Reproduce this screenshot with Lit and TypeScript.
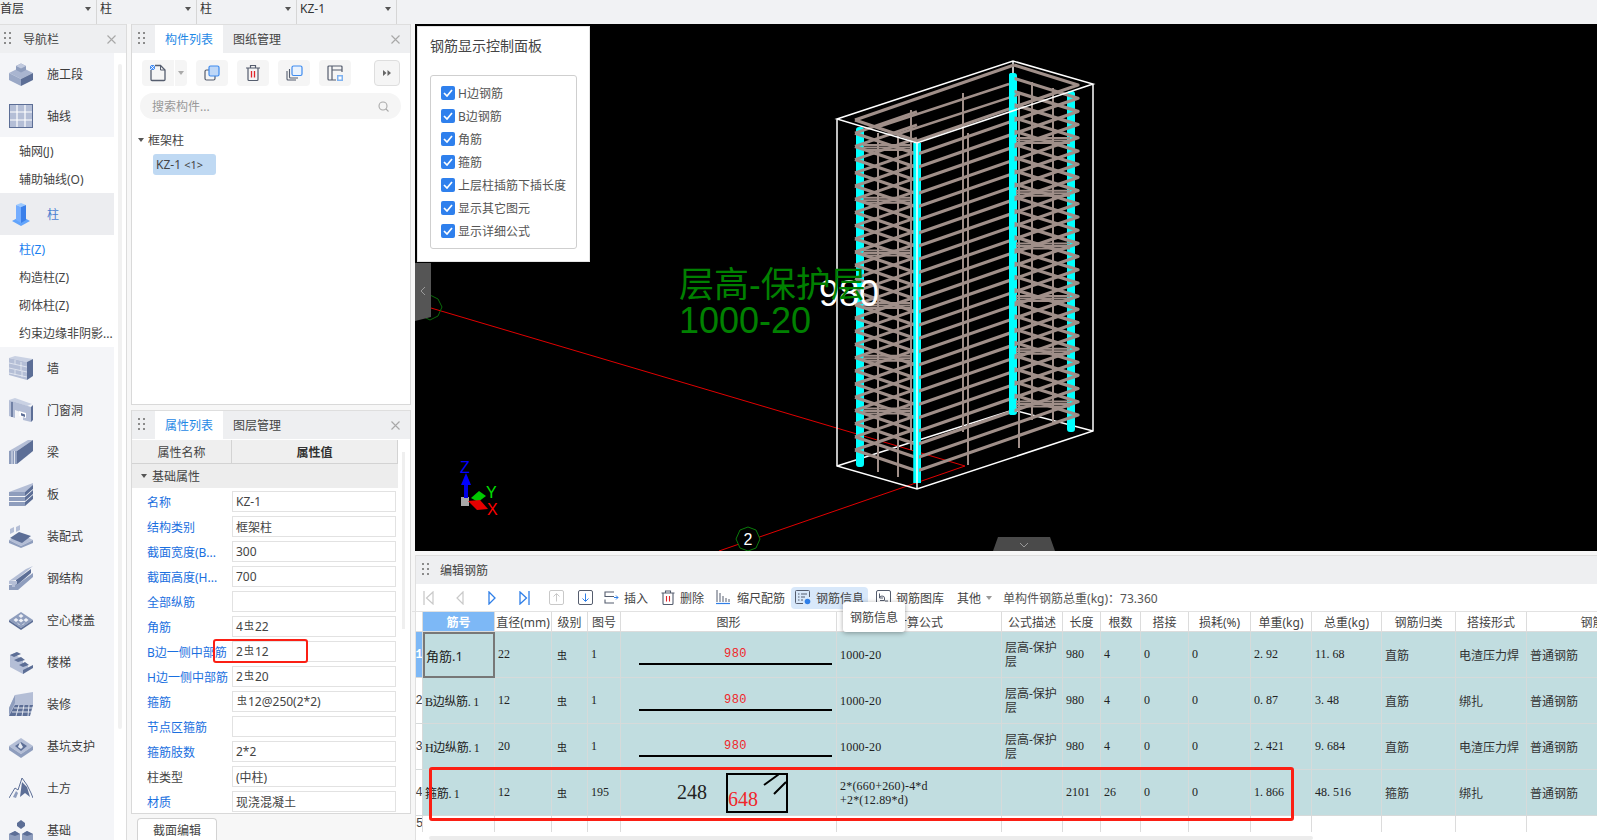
import { LitElement, html, css, svg } from "lit";
import { customElement } from "lit/decorators.js";

const L = "#b4bed6", M = "#8e9dbd", D = "#5c6e96";

const navIcons: Record<string, any> = {
  shigong: svg`<path d="M0 11 12 5 24 11 12 17Z" fill="#a9b5d0"/><path d="M0 11 12 17V24L0 18Z" fill="#9aa8c6"/><path d="M24 11 12 17V24L24 18Z" fill="${D}"/><path d="M7 4 12 1.500 17 4V8L12 10.500 7 8Z" fill="${M}"/><path d="M7 4 12 1.500 17 4 12 6.500Z" fill="#c0c9de"/>`,
  axis: svg`<rect x="0.500" y="0.500" width="23" height="23" fill="${L}" stroke="${D}"/><path d="M8 1V23M16 1V23M1 8H23M1 16H23" stroke="#fff" stroke-width="1.200"/>`,
  col: svg`<path d="M0 19 9 14 18 19 9 24Z" fill="#62a4fb"/><path d="M4 3 9 1 14 3 9 5Z" fill="#9cc9ff"/><path d="M4 3 9 5V21L4 18Z" fill="#74adff"/><path d="M14 3 9 5V21L14 18Z" fill="#3b80ea"/>`,
  wall: svg`<path d="M0 2 6 0 24 3 18 6Z" fill="#c9d1e3"/><path d="M0 2 18 6V24L0 19Z" fill="${L}"/><path d="M24 3 18 6V24L24 20Z" fill="${D}"/><path d="M0 7 18 11M0 12 18 16M0 17 18 21M6 4V8M12 9V14M6 14V19M12 6V10M13 15V21" stroke="#e8ecf4" stroke-width="0.800" fill="none"/>`,
  door: svg`<path d="M0 2 6 0 23 6 18 8Z" fill="#c9d1e3"/><path d="M0 2 22 9V24L14 22V15L6 12V20L0 18Z" fill="${L}"/><path d="M10 13 17 15V20L10 18Z" fill="#fff"/><path d="M12 15 16 16.500V19L12 17.500Z" fill="${D}"/><path d="M22 9 24 7V22L22 24Z" fill="${D}"/><path d="M3 4V19" stroke="${D}" stroke-width="1.500"/>`,
  beam: svg`<path d="M0 11 19 0 24 0 8 11Z" fill="${L}"/><path d="M0 11H8V24H0Z" fill="${M}"/><path d="M3 11V24M5.500 11V24" stroke="#dfe4ee"/><path d="M8 11 24 0V11L8 24Z" fill="${D}"/>`,
  slab: svg`<path d="M0 10 16 4 24 1V4L16 10H0Z" fill="${L}"/><path d="M0 10H16V14H0ZM0 15H16V19H0ZM0 20H16V24H0Z" fill="${M}"/><path d="M16 10 24 3V7L16 14ZM16 15 24 8V12L16 19ZM16 20 24 13V17L16 24Z" fill="${D}"/>`,
  prefab: svg`<path d="M1 5 5 3V8L1 10ZM7 3 11 1V6L7 8Z" fill="${L}"/><path d="M0 16 12 10 24 16 12 22Z" fill="${L}"/><path d="M0 16 12 22V24L0 19ZM24 16 12 22V24L24 19Z" fill="${M}"/><path d="M1 14 10 8 22 12 13 19Z" fill="${D}"/>`,
  steel: svg`<path d="M0 15 17 3 24 0 7 14Z" fill="${L}"/><path d="M6 15 10 15 8 19Z" fill="${D}"/><path d="M7 14 22 3V7L7 20Z" fill="${D}"/><path d="M0 19 9 18 24 7V11L9 24H0Z" fill="${M}"/><path d="M0 15H8V18H0Z" fill="${L}"/><path d="M3 17H6V21H3Z" fill="${L}"/>`,
  hollow: svg`<path d="M0 12 12 4 24 12 12 20Z" fill="${M}"/><path d="M0 12V14L12 22 24 14V12L12 20Z" fill="${D}"/><g fill="#eef0f6"><path d="M12 6 14.500 8 12 10 9.500 8Z"/><path d="M7 10 9.500 12 7 14 4.500 12Z"/><path d="M17 10 19.500 12 17 14 14.500 12Z"/><path d="M12 10.500 14.500 12.500 12 14.500 9.500 12.500Z"/><path d="M7.500 14 10 16 12 17.500 9.500 16.500Z"/><path d="M16.500 14 14 16 12 17.500 14.500 16.500Z"/></g>`,
  stairs: svg`<path d="M1 5 8 2 8 6 14 9V13L19 16V20L14 24 1 17Z" fill="${L}"/><path d="M1 5 8 2 12 4 5 7ZM5 10 12 7 16 10 9 12ZM10 15 16 12 20 15 14 17Z" fill="${D}"/><path d="M14 24 24 18V15L14 20Z" fill="${D}"/>`,
  deco: svg`<path d="M0 16 6 3 24 0V14L4 24H0Z" fill="${L}"/><path d="M0 16 6 3V11L0 23Z" fill="${M}"/><path d="M0 24 6 13H24L21 24Z" fill="${D}"/><path d="M5 16H24M3 20H23M10 13 7 24M15 13 13 24M20 13 19 24" stroke="#e8ecf4" stroke-width="0.900"/>`,
  pit: svg`<path d="M0 12 12 4 24 12 12 20Z" fill="${L}"/><path d="M0 12V16L12 24 24 16V12L12 20Z" fill="${M}"/><path d="M6 12 12 8 18 12 12 17Z" fill="${D}"/><path d="M11 8 14 13 12 15 9 13Z" fill="#e6eaf2"/>`,
  earth: svg`<path d="M0 22 6 12 9 14 13 2 18 9 22 17 24 22" fill="none" stroke="${D}" stroke-width="1"/><path d="M11 21 13 6 18 11 21 21 16 17Z" fill="${D}"/><path d="M4 21 7 15 9 17 7 22Z" fill="${M}"/>`,
  found: svg`<path d="M8 5 12 2 16 5V8L12 11 8 8Z" fill="${D}"/><path d="M0 16 6 13 11 16V23L6 26 0 23Z" fill="${M}"/><path d="M13 16 18 13 24 16V23L18 26 13 23Z" fill="${M}"/><path d="M0 16 6 13 11 16 6 18ZM13 16 18 13 24 16 18 18Z" fill="${D}"/>`,
};

type NavItem = { t: string; i?: string; on?: boolean; act?: boolean };
const nav: NavItem[] = [
  { t: "施工段", i: "shigong" },
  { t: "轴线", i: "axis" },
  { t: "轴网(J)" },
  { t: "辅助轴线(O)" },
  { t: "柱", i: "col", on: true },
  { t: "柱(Z)", act: true },
  { t: "构造柱(Z)" },
  { t: "砌体柱(Z)" },
  { t: "约束边缘非阴影..." },
  { t: "墙", i: "wall" },
  { t: "门窗洞", i: "door" },
  { t: "梁", i: "beam" },
  { t: "板", i: "slab" },
  { t: "装配式", i: "prefab" },
  { t: "钢结构", i: "steel" },
  { t: "空心楼盖", i: "hollow" },
  { t: "楼梯", i: "stairs" },
  { t: "装修", i: "deco" },
  { t: "基坑支护", i: "pit" },
  { t: "土方", i: "earth" },
  { t: "基础", i: "found" },
];

const REBAR = "虫";
const props: [string, any, boolean][] = [
  ["名称", "KZ-1", true],
  ["结构类别", "框架柱", true],
  ["截面宽度(B...", "300", true],
  ["截面高度(H...", "700", true],
  ["全部纵筋", "", true],
  ["角筋", html`4<span class="rb">${REBAR}</span>22`, true],
  ["B边一侧中部筋", html`2<span class="rb">${REBAR}</span>12`, true],
  ["H边一侧中部筋", html`2<span class="rb">${REBAR}</span>20`, true],
  ["箍筋", html`<span class="rb">${REBAR}</span>12@250(2*2)`, true],
  ["节点区箍筋", "", true],
  ["箍筋肢数", "2*2", true],
  ["柱类型", "(中柱)", false],
  ["材质", "现浇混凝土", true],
];

const checks = ["H边钢筋", "B边钢筋", "角筋", "箍筋", "上层柱插筋下插长度", "显示其它图元", "显示详细公式"];

const headers = ["筋号", "直径(mm)", "级别", "图号", "图形", "计算公式", "公式描述", "长度", "根数", "搭接", "损耗(%)", "单重(kg)", "总重(kg)", "钢筋归类", "搭接形式", "钢筋类型"];
const D3 = "层高-保护层";
const rows = [
  ["角筋.1", "22", "1", "1000-20", D3, "980", "4", "0", "0", "2. 92", "11. 68", "直筋", "电渣压力焊", "普通钢筋"],
  ["B边纵筋. 1", "12", "1", "1000-20", D3, "980", "4", "0", "0", "0. 87", "3. 48", "直筋", "绑扎", "普通钢筋"],
  ["H边纵筋. 1", "20", "1", "1000-20", D3, "980", "4", "0", "0", "2. 421", "9. 684", "直筋", "电渣压力焊", "普通钢筋"],
  ["箍筋. 1", "12", "195", "2*(660+260)-4*d +2*(12.89*d)", "", "2101", "26", "0", "0", "1. 866", "48. 516", "箍筋", "绑扎", "普通钢筋"],
];

// ---- cage geometry (page coordinates, the svg viewBox matches the page)
const RING = "#a08f89";
const levels = Array.from({ length: 26 }, (_, k) => k * 13.2);
function cage() {
  const rings = levels.map((d, k) => {
    const full = k === 0;
    const yLF = 120 + d, yFF = 141 + d, yRR = 85 + d, yBB = 65 + d;
    return svg`
      <path d="M855 ${yLF} L917 ${yFF} L1078 ${yRR} L1014 ${yBB}" fill="none" stroke="${RING}" stroke-width="3.200" stroke-linejoin="round"/>
      ${full
        ? svg`<path d="M855 ${yLF} L1014 ${yBB}" fill="none" stroke="${RING}" stroke-width="3.200"/>`
        : svg`<path d="M855 ${yLF} L917 ${yLF - 21.500}" fill="none" stroke="${RING}" stroke-width="3"/>`}`;
  });
  const ties = [0, 1, 2, 3, 4, 5].flatMap((i) => {
    const y = 145 + i * 52.7;
    const y2 = 138 + i * 52.7;
    return [
      svg`<path d="M863 ${y}H910M863 ${y + 2.500}H910M863 ${y + 5}H910" stroke="${RING}" stroke-width="2"/>`,
      svg`<path d="M1016 ${y2}H1070M1016 ${y2 + 2.500}H1070M1016 ${y2 + 5}H1070" stroke="${RING}" stroke-width="2"/>`,
    ];
  });
  const verts: [number, number, number][] = [
    [878, 133, 472], [898, 133, 477], [911, 110, 450], [963, 93, 432], [968, 133, 465],
    [1019, 93, 448], [1032, 82, 420], [1053, 88, 425],
  ];
  return svg`
    <path d="M1013 61V410M837 466 1013 410 1093 431" fill="none" stroke="#fff" stroke-width="1.500"/>
    <rect x="856" y="127" width="8" height="340" rx="3" fill="#00ffff"/>
    <rect x="1067" y="91" width="8" height="341" rx="3" fill="#00ffff"/>
    <rect x="1009" y="73" width="8" height="342" rx="3" fill="#00ffff"/>
    <rect x="913.500" y="143" width="7.500" height="340" fill="#00ffff"/>
    ${verts.map(([x, a, b]) => svg`<path d="M${x} ${a}V${b}" stroke="${RING}" stroke-width="2"/>`)}
    <path d="M878 127 1009 84M898 134 1020 94" fill="none" stroke="${RING}" stroke-width="2.400"/>
    ${rings}
    ${ties}
    <rect x="913.500" y="143" width="5.500" height="340" fill="#00ffff"/>
    <rect x="1009" y="73" width="5.500" height="342" rx="2" fill="#00ffff"/>
    <path d="M837 119 1013 61 1093 84 917 143ZM837 119V466L917 489 1093 431V84M917 143V489" fill="none" stroke="#fff" stroke-width="1.500"/>`;
}

const grip = html`<svg class="grip" width="7" height="14" viewBox="0 0 7 14"><g fill="#8b8b8b"><rect x="0" y="0" width="2" height="2"/><rect x="5" y="0" width="2" height="2"/><rect x="0" y="5" width="2" height="2"/><rect x="5" y="5" width="2" height="2"/><rect x="0" y="10" width="2" height="2"/><rect x="5" y="10" width="2" height="2"/></g></svg>`;
const closeX = html`<svg class="close" width="9" height="9" viewBox="0 0 9 9"><path d="M0.500 0.500 8.500 8.500M8.500 0.500 0.500 8.500" stroke="#a8a8a8" stroke-width="1.100"/></svg>`;

@customElement("app-root")
export class AppRoot extends LitElement {
  static styles = css`
    :host { display: block; width: 1597px; height: 840px; overflow: hidden; position: relative; font-family: "Noto Sans", "Noto Sans CJK SC", sans-serif; font-size: 12px; color: #444; background: #f7f7f7; }
    .page { display: grid; grid-template-rows: 24px 816px; height: 840px; }
    .top { display: flex; background: #f1f2f4; }
    .sel { width: 100px; box-sizing: border-box; padding-left: 3px; border-right: 1px solid #d6d6d6; display: flex; align-items: center; justify-content: space-between; padding-right: 5px; padding-bottom: 6px; line-height: 16px; color: #333; }
    .sel.first { width: 97px; padding-left: 0; }
    .tri { width: 0; height: 0; border: 3px solid transparent; border-top: 4px solid #555; border-bottom: 0; }
    .main { display: flex; min-height: 0; }
    .nav { width: 127px; flex: none; border-right: 1px solid #dcdcdc; box-sizing: border-box; background: #fff; position: relative; overflow: hidden; }
    .phead { height: 29px; background: #eeeff1; display: flex; align-items: center; box-sizing: border-box; border-top: 1px solid #dedede; position: relative; color: #444; }
    .nav .phead { padding-left: 4px; gap: 12px; }
    .phead .close { position: absolute; right: 10px; top: 10px; }
    .navbody { display: flex; }
    .navlist { width: 114px; flex: none; }
    .track { width: 4px; height: 665px; margin: 11px 0 0 4px; background: #f1f1f1; border-radius: 2px; flex: none; }
    .mi { height: 42px; background: #f4f5f8; display: flex; align-items: center; padding-left: 9px; gap: 14px; color: #3c3c3c; box-sizing: border-box; }
    .mi svg { width: 24px; height: 24px; flex: none; }
    .mi.on { background: #ecedf0; color: #4a7fd0; }
    .mi.on svg { margin-left: 3px; margin-right: -3px; }
    .si { height: 28px; display: flex; align-items: center; padding-left: 19px; background: #fff; color: #444; white-space: nowrap; overflow: hidden; }
    .si.act { color: #1a7ff0; }
    .mid { width: 280px; margin-left: 4px; flex: none; display: flex; flex-direction: column; gap: 4px; }
    .panel { border: 1px solid #d9d9d9; border-top: 0; background: #fff; box-sizing: border-box; flex: none; }
    .p1 { height: 381px; margin-bottom: 1px; }
    .p2 { height: 404px; position: relative; }
    .mid .phead { padding-left: 6px; }
    .tab { height: 28px; display: flex; align-items: center; justify-content: center; width: 68px; }
    .tab.active { background: #fff; color: #1e88e5; margin-left: 10px; }
    .tools { display: flex; gap: 9px; padding: 7px 10px 0 10px; }
    .tb { width: 32px; height: 26px; border-radius: 4px; background: #f5f5f5; display: flex; align-items: center; justify-content: center; flex: none; }
    .tb svg { display: block; }
    .splitgroup { display: flex; gap: 1px; }
    .splitgroup .tb:first-child { border-radius: 4px 0 0 4px; }
    .splitgroup .arrow { width: 12px; border-radius: 0 4px 4px 0; }
    .tb .tri { border-top-color: #aaa; }
    .tb.more { width: 26px; box-sizing: border-box; border: 1px solid #dedede; margin-left: auto; margin-right: 0; }
    .search { margin: 7px 9px 0 8px; height: 26px; border-radius: 13px; background: #f5f5f5; color: #999; display: flex; align-items: center; justify-content: space-between; padding: 0 12px; }
    .tree { padding: 13px 0 0 6px; }
    .tree .node { display: flex; align-items: center; gap: 4px; height: 16px; color: #444; }
    .chip { margin: 6px 0 0 15px; width: 63px; height: 21px; box-sizing: border-box; background: #bfd9f3; border-radius: 3px; display: flex; align-items: center; padding-left: 3px; color: #444; white-space: pre; }
    .chip small { font-size: 11px; }
    .pbody { display: flex; }
    .ptable { width: 266px; flex: none; }
    .phd { display: grid; grid-template-columns: 100px 166px; height: 24px; background: #efefef; border-bottom: 1px solid #d3d3d3; box-sizing: border-box; margin-top: 1px; }
    .phd div { display: flex; align-items: center; justify-content: center; border-right: 1px solid #d3d3d3; }
    .phd .b { font-weight: 700; color: #333; }
    .grp { height: 24px; background: #ededed; display: flex; align-items: center; padding-left: 9px; gap: 5px; color: #444; }
    .rowswrap { padding-top: 1px; }
    .pr { display: grid; grid-template-columns: 100px 164px; height: 25px; align-items: center; }
    .pr .lb { padding-left: 15px; color: #1a6fe0; white-space: nowrap; font-size: 12px; overflow: visible; }
    .pr .lb.dark { color: #444; }
    .pr .vl { height: 21px; border: 1px solid #e2e2e2; box-sizing: border-box; padding-left: 3px; display: flex; align-items: center; color: #444; }
    .rb { font-size: 10px; position: relative; top: -2px; margin: 0 1px; }
    .ps { width: 3px; height: 177px; margin: 13px 0 0 4px; background: #efefef; flex: none; }
    .secbtn { width: 80px; height: 22px; margin: 0 0 0 6px; box-sizing: border-box; border: 1px solid #d3d3d3; border-bottom: 0; border-radius: 4px 4px 0 0; background: #fff; display: flex; align-items: center; justify-content: center; flex: none; }
    .redbox { position: absolute; border: 2px solid #fb1f14; border-radius: 3px; box-sizing: border-box; pointer-events: none; }
    .rb1 { left: 81px; top: 229px; width: 95px; height: 24px; }
    .right { width: 1182px; margin-left: 4px; flex: none; display: flex; flex-direction: column; position: relative; }
    .canvas { height: 527px; background: #000; position: relative; flex: none; }
    .canvas > svg { display: block; }
    .t-green { font-family: "Liberation Sans", "Noto Sans CJK SC", sans-serif; font-size: 35px; fill: #008000; }
    .t-green.lg { font-size: 36px; }
    .t-white { font-family: "Liberation Sans", sans-serif; font-size: 36px; fill: #fff; }
    .t-ax { font-family: "Liberation Sans", sans-serif; font-size: 16px; }
    .t-2 { font-family: "Liberation Sans", sans-serif; font-size: 16px; fill: #fff; }
    .ctrl { position: absolute; left: 2px; top: 2px; width: 173px; height: 236px; background: #fff; box-sizing: border-box; padding: 10px 12px; border: 1px solid #e4e4e4; }
    .ctrl h4 { margin: 0; font-weight: 400; font-size: 14px; line-height: 18px; color: #444; }
    .group { margin-top: 20px; border: 1px solid #cfcfcf; border-radius: 3px; height: 174px; box-sizing: border-box; padding: 5px 10px; }
    .ck { height: 23px; display: flex; align-items: center; gap: 3px; white-space: nowrap; color: #555; }
    .box { width: 14px; height: 14px; background: #2f80ed; border-radius: 2px; flex: none; display: flex; align-items: center; justify-content: center; }
    .edit { margin-top: 4px; background: #fff; flex: 1; position: relative; border-left: 1px solid #e0e0e0; }
    .ehead { height: 29px; background: #eeeff1; border-top: 1px solid #dedede; box-sizing: border-box; display: flex; align-items: center; padding-left: 6px; gap: 11px; }
    .etools { height: 28px; display: flex; align-items: center; box-sizing: border-box; border-bottom: 1px solid #e2e2e2; padding-left: 0; margin-left: -4px; }
    .nv { width: 32px; display: flex; justify-content: center; flex: none; }
    .nv.tight { width: 26px; }
    .tool { display: flex; align-items: center; gap: 5px; margin-left: 13px; color: #444; white-space: nowrap; }
    .tool.ins { margin-left: 6px; }
    .tool.info { background: #d8e8fa; height: 22px; border-radius: 4px; padding: 0 4px; margin-left: 6px; margin-right: -4px; }
    .tool.wide { gap: 7px; margin-left: 12px; }
    .tool.lib { margin-left: 12px; }
    .tool .tri { border-top-color: #999; margin-left: 0; }
    .tool.oth { margin-left: 13px; }
    .sum { margin-left: 11px; color: #555; white-space: nowrap; }
    .grid { display: grid; grid-template-columns: 7px 72px 57px 36px 33px 216px 165px 61px 38px 40px 48px 62px 61px 70px 74px 71px 156px; width: 1181px; overflow: hidden; font-family: "Liberation Serif", "Noto Sans CJK SC", serif; }
    .gh { height: 20px; border-right: 1px solid #dcdcdc; border-bottom: 1px solid #dcdcdc; box-sizing: border-box; display: flex; align-items: center; justify-content: center; font-family: "Noto Sans", "Noto Sans CJK SC", sans-serif; color: #444; white-space: nowrap; overflow: hidden; }
    .gh.sel2 { background: #7db8f6; color: #fff; font-weight: 700; }
    .gc { height: 46px; background: #c1dde0; border-right: 1px solid #d6dada; border-bottom: 1px solid #d6dada; box-sizing: border-box; display: flex; align-items: center; padding-left: 3px; color: #222; overflow: hidden; }
    .gc.sans { font-family: "Noto Sans", "Noto Sans CJK SC", sans-serif; color: #333; }
    .gc.num { background: #fff; padding: 0; justify-content: center; font-family: "Liberation Mono", monospace; font-size: 12px; color: #444; }
    .gc.num.sel2 { background: #7db8f6; color: #fff; font-weight: 700; }
    .gc.cur { border: 2px solid #777; font-size: 13px; font-family: "Noto Sans", "Noto Sans CJK SC", sans-serif; padding-left: 1px; }
    .gc.nm { white-space: nowrap; padding-left: 2px; font-size: 12px; letter-spacing: -0.300px; }
    .gc.desc { line-height: 14px; word-break: break-all; }
    .gc.form { white-space: pre-line; line-height: 14px; letter-spacing: 0.200px; }
    .gc.sign { font-size: 10px; padding-left: 5px; font-family: "Noto Sans CJK SC", sans-serif; }
    .gc.shape { padding: 14px 0 0 18px; flex-direction: column; align-items: stretch; }
    .gc.shape.st { padding: 0 0 0 56px; flex-direction: row; align-items: center; }
    .fig { text-align: center; color: #f0262a; line-height: 16px; width: 193px; font-size: 12px; letter-spacing: 0.500px; font-family: "Liberation Mono", monospace; }
    .ln { width: 193px; height: 2px; background: #000; margin-top: 1px; }
    .n248 { font-size: 20px; width: 49px; color: #222; flex: none; }
    .t-648 { font-family: "Liberation Serif", serif; font-size: 20px; fill: #f0262a; }
    .g5 { height: 16px; border-right: 1px solid #dcdcdc; box-sizing: border-box; background: #fff; font-family: "Liberation Mono", monospace; font-size: 12px; line-height: 16px; color: #444; overflow: hidden; }
    .hs { width: 884px; height: 4px; margin: 4px 0 0 13px; background: #ececec; border-radius: 2px; }
    .rb2 { left: 13px; top: 212px; width: 865px; height: 54px; border-width: 3px; }
    .tip { position: absolute; left: 427px; top: 47px; width: 62px; height: 30px; box-sizing: border-box; background: #fff; border-radius: 3px; box-shadow: 0 1px 5px rgba(0,0,0,.35); display: flex; align-items: center; justify-content: center; color: #444; white-space: nowrap; }
  `;

  render() {
    return html`<div class="page">
      <div class="top">
        <div class="sel first">首层<i class="tri"></i></div>
        <div class="sel">柱<i class="tri"></i></div>
        <div class="sel">柱<i class="tri"></i></div>
        <div class="sel">KZ-1<i class="tri"></i></div>
      </div>
      <div class="main">
        ${this.renderNav()}
        ${this.renderMid()}
        <div class="right">
          ${this.renderCanvas()}
          ${this.renderEdit()}
        </div>
      </div>
    </div>`;
  }

  renderNav() {
    return html`<div class="nav">
      <div class="phead">${grip}<span>导航栏</span>${closeX}</div>
      <div class="navbody">
        <div class="navlist">
          ${nav.map((n) =>
            n.i
              ? html`<div class="mi ${n.on ? "on" : ""}"><svg viewBox="0 0 24 24">${navIcons[n.i]}</svg><span>${n.t}</span></div>`
              : html`<div class="si ${n.act ? "act" : ""}">${n.t}</div>`
          )}
        </div>
        <div class="track"></div>
      </div>
    </div>`;
  }

  renderMid() {
    const S = "#555d6e";
    return html`<div class="mid">
      <div class="panel p1">
        <div class="phead">${grip}<div class="tab active">构件列表</div><div class="tab">图纸管理</div>${closeX}</div>
        <div class="tools">
          <div class="splitgroup">
            <div class="tb"><svg width="18" height="18" viewBox="0 0 18 18"><path d="M2 6V15.500Q2 16.500 3 16.500H15Q16 16.500 16 15.500V6L11.500 1.500H6" fill="none" stroke="${S}" stroke-width="1.300"/><path d="M11.500 1.500V6H16" fill="none" stroke="${S}" stroke-width="1"/><rect x="1" y="1" width="5" height="5" fill="#4a8ff0"/><path d="M1 1 6 6M6 1 1 6" stroke="#fff" stroke-width="0.800"/></svg></div>
            <div class="tb arrow"><i class="tri"></i></div>
          </div>
          <div class="tb"><svg width="16" height="16" viewBox="0 0 16 16"><rect x="1" y="5" width="10" height="10" rx="1.500" fill="none" stroke="${S}" stroke-width="1.200"/><rect x="5" y="1" width="10" height="10" rx="1.500" fill="#bed7f7" stroke="#3e8bef" stroke-width="1.200"/></svg></div>
          <div class="tb"><svg width="16" height="18" viewBox="0 0 16 18"><path d="M1 4H15M5.500 4V1.500H10.500V4M3 4V15.500Q3 16.500 4 16.500H12Q13 16.500 13 15.500V4" fill="none" stroke="${S}" stroke-width="1.200"/><path d="M6.500 7V13.500M9.500 7V13.500" stroke="#e0242a" stroke-width="1.300"/></svg></div>
          <div class="tb"><svg width="17" height="16" viewBox="0 0 17 16"><path d="M1 6V14Q1 15 2 15H10M3.500 4V12Q3.500 13 4.500 13H12" fill="none" stroke="${S}" stroke-width="1.100"/><rect x="6" y="1" width="10" height="9.500" rx="1.500" fill="#eaf3fe" stroke="#3e8bef" stroke-width="1.200"/></svg></div>
          <div class="tb"><svg width="16" height="16" viewBox="0 0 16 16"><path d="M15 7V2Q15 1 14 1H2Q1 1 1 2V14Q1 15 2 15H9M5 1V15M5 5H15" fill="none" stroke="${S}" stroke-width="1.200"/><rect x="10" y="10" width="6" height="6" fill="#7fb2f0"/><rect x="11.500" y="11.500" width="3" height="3" fill="#fff"/></svg></div>
          <div class="tb more"><svg width="8" height="6" viewBox="0 0 8 6"><path d="M0 0 3.500 3 0 6ZM4.500 0 8 3 4.500 6Z" fill="#666"/></svg></div>
        </div>
        <div class="search"><span>搜索构件...</span><svg width="11" height="11" viewBox="0 0 11 11"><circle cx="5" cy="5" r="4" fill="none" stroke="#aaa" stroke-width="1.100"/><path d="M8 8 10.500 10.500" stroke="#aaa" stroke-width="1.100"/></svg></div>
        <div class="tree">
          <div class="node"><i class="tri"></i>框架柱</div>
          <div class="chip">KZ-1 <small>&lt;1&gt;</small></div>
        </div>
      </div>
      <div class="panel p2">
        <div class="phead">${grip}<div class="tab active">属性列表</div><div class="tab">图层管理</div>${closeX}</div>
        <div class="pbody">
          <div class="ptable">
            <div class="phd"><div>属性名称</div><div class="b">属性值</div></div>
            <div class="grp"><i class="tri"></i>基础属性</div>
            <div class="rowswrap">
              ${props.map(([a, b, blue]) => html`<div class="pr"><div class="lb ${blue ? "" : "dark"}">${a}</div><div class="vl">${b}</div></div>`)}
            </div>
          </div>
          <div class="ps"></div>
        </div>
        <div class="redbox rb1"></div>
      </div>
      <div class="secbtn">截面编辑</div>
    </div>`;
  }

  renderCanvas() {
    return html`<div class="canvas">
      <svg width="1182" height="527" viewBox="415 24 1182 527">
        <path d="M431 308 965 466 719 551" fill="none" stroke="#e00000" stroke-width="1"/>
        <path d="M430 295 438 299 442 307 438 316 430 320 422 316 418 307 422 299Z" fill="none" stroke="#0a6a0a" stroke-width="1"/>
        <path d="M748 527 756 530 760 539 756 548 748 551 740 548 736 539 740 530Z" fill="#000" stroke="#0a7a0a" stroke-width="1"/>
        <text class="t-2" x="743.500" y="545">2</text>
        ${cage()}
        <text class="t-white" x="819" y="306">980</text>
        <text class="t-green" x="679" y="297">层高-保护层</text>
        <text class="t-green lg" x="679" y="333">1000-20</text>
        <path d="M415 263H431V317L415 321Z" fill="#555"/>
        <path d="M425 287 421 291 425 295" fill="none" stroke="#9a9a9a" stroke-width="1"/>
        <path d="M993 551 998 537H1050L1055 551Z" fill="#4a4a4a"/>
        <path d="M1020 543 1024 547 1028 543" fill="none" stroke="#999" stroke-width="1"/>
        <rect x="461" y="497" width="8" height="9" fill="#a9a9a9"/>
        <rect x="464" y="484" width="4" height="14" fill="#0000e6"/>
        <path d="M466 473 471 485H461Z" fill="#0000ff"/>
        <path d="M471 498 479 491 486 496 478 502Z" fill="#00c800"/>
        <path d="M468 501 480 500 488 509 477 510Z" fill="#e60000"/>
        <text class="t-ax" x="460" y="473" fill="#0000ff">Z</text>
        <text class="t-ax" x="486" y="498" fill="#00e000">Y</text>
        <text class="t-ax" x="487" y="515" fill="#ff0000">X</text>
      </svg>
      <div class="ctrl">
        <h4>钢筋显示控制面板</h4>
        <div class="group">
          ${checks.map((c) => html`<div class="ck"><span class="box"><svg width="10" height="8" viewBox="0 0 10 8"><path d="M1 4 4 7 9 1" fill="none" stroke="#fff" stroke-width="1.700"/></svg></span>${c}</div>`)}
        </div>
      </div>
    </div>`;
  }

  renderEdit() {
    const S = "#555d6e";
    const G = "#c9c9c9";
    const B = "#2f7fe8";
    return html`<div class="edit">
      <div class="ehead">${grip}<span>编辑钢筋</span></div>
      <div class="etools">
        <div class="nv"><svg width="11" height="14" viewBox="0 0 11 14"><path d="M1 0V14" stroke="${G}" stroke-width="1.300"/><path d="M10 1 3.500 7 10 13Z" fill="none" stroke="${G}" stroke-width="1.200"/></svg></div>
        <div class="nv"><svg width="8" height="14" viewBox="0 0 8 14"><path d="M7 1 1 7 7 13Z" fill="none" stroke="${G}" stroke-width="1.200"/></svg></div>
        <div class="nv"><svg width="8" height="14" viewBox="0 0 8 14"><path d="M1 1 7 7 1 13Z" fill="none" stroke="${B}" stroke-width="1.300"/></svg></div>
        <div class="nv"><svg width="11" height="14" viewBox="0 0 11 14"><path d="M10 0V14" stroke="${B}" stroke-width="1.300"/><path d="M1 1 7.500 7 1 13Z" fill="none" stroke="${B}" stroke-width="1.300"/></svg></div>
        <div class="nv"><svg width="15" height="15" viewBox="0 0 15 15"><rect x="0.500" y="0.500" width="14" height="14" rx="1.500" fill="none" stroke="${G}"/><path d="M7.500 11.500V4M4.500 6.500 7.500 3.500 10.500 6.500" fill="none" stroke="${G}"/></svg></div>
        <div class="nv tight"><svg width="15" height="15" viewBox="0 0 15 15"><rect x="0.500" y="0.500" width="14" height="14" rx="1.500" fill="none" stroke="${S}"/><path d="M7.500 3.500V11M4.500 8.500 7.500 11.500 10.500 8.500" fill="none" stroke="${B}"/></svg></div>
        <div class="tool ins"><svg width="15" height="13" viewBox="0 0 15 13"><path d="M10 1H1V5.500H10M1 8.500V12H10" fill="none" stroke="${S}" stroke-width="1.100"/><path d="M10 6.500H14M12 4.500 14 6.500 12 8.500" fill="none" stroke="${B}" stroke-width="1"/></svg>插入</div>
        <div class="tool"><svg width="14" height="15" viewBox="0 0 14 15"><path d="M0.500 3H13.500M4.500 3V1H9.500V3M2 3V13.500Q2 14.500 3 14.500H11Q12 14.500 12 13.500V3" fill="none" stroke="${S}" stroke-width="1.100"/><path d="M5.500 6V11.500M8.500 6V11.500" stroke="#e0242a" stroke-width="1.100"/></svg>删除</div>
        <div class="tool wide"><svg width="14" height="15" viewBox="0 0 14 15"><path d="M1 0V12M4 3V12M7 6V12M10 8V12M13 9V12" stroke="${S}" stroke-width="1"/><path d="M0 13.500H14" stroke="${B}" stroke-width="1.200"/></svg>缩尺配筋</div>
        <div class="tool info"><svg width="16" height="15" viewBox="0 0 16 15"><path d="M14.500 7V1.500Q14.500 0.500 13.500 0.500H1.500Q0.500 0.500 0.500 1.500V12.500Q0.500 13.500 1.500 13.500H8M3 4H4.500M6 4H12M3 7H4.500M6 7H10M3 10H4.500M6 10H8" fill="none" stroke="${S}" stroke-width="1"/><circle cx="12.500" cy="11.500" r="2.800" fill="${B}"/></svg>钢筋信息</div>
        <div class="tool lib"><svg width="15" height="15" viewBox="0 0 15 15"><rect x="0.500" y="0.500" width="14" height="14" rx="1.500" fill="none" stroke="${S}"/><path d="M3.500 3.500V8H7M3.500 8Q3.500 6 6 6T8.500 8V10.500H4M9 11H12" fill="none" stroke="${S}"/></svg>钢筋图库</div>
        <div class="tool oth">其他<i class="tri"></i></div>
        <div class="sum">单构件钢筋总重(kg)：73.360</div>
      </div>
      <div class="grid">
        <div class="gh"></div>
        ${headers.map((h, i) => html`<div class="gh ${i === 0 ? "sel2" : ""}">${h}</div>`)}
        ${rows.map((r, i) => this.renderRow(r, i))}
        <div class="g5">5</div>
        ${headers.map(() => html`<div class="g5"></div>`)}
      </div>
      <div class="hs"></div>
      <div class="redbox rb2"></div>
      <div class="tip">钢筋信息</div>
    </div>`;
  }

  renderRow(r: string[], i: number) {
    const [name, dia, fig, formula, desc, len, cnt, lap, loss, uw, tw, cat, form, type] = r;
    return html`
      <div class="gc num ${i === 0 ? "sel2" : ""}">${i + 1}</div>
      <div class="gc ${i === 0 ? "cur" : "nm"}">${name}</div>
      <div class="gc">${dia}</div>
      <div class="gc sign">${REBAR}</div>
      <div class="gc">${fig}</div>
      ${i < 3
        ? html`<div class="gc shape"><div class="fig">980</div><div class="ln"></div></div>`
        : html`<div class="gc shape st"><span class="n248">248</span>
            <svg width="62" height="40" viewBox="0 0 62 40"><rect x="1" y="1" width="60" height="38" fill="none" stroke="#000" stroke-width="2"/><text class="t-648" x="2" y="33">648</text><path d="M38 12 52.500 1.500M48 21 60 9" stroke="#000" stroke-width="2"/></svg></div>`}
      <div class="gc form">${formula.replace(" +", "\n+")}</div>
      <div class="gc desc sans">${desc}</div>
      <div class="gc">${len}</div>
      <div class="gc">${cnt}</div>
      <div class="gc">${lap}</div>
      <div class="gc">${loss}</div>
      <div class="gc">${uw}</div>
      <div class="gc">${tw}</div>
      <div class="gc sans">${cat}</div>
      <div class="gc sans">${form}</div>
      <div class="gc sans">${type}</div>`;
  }
}
